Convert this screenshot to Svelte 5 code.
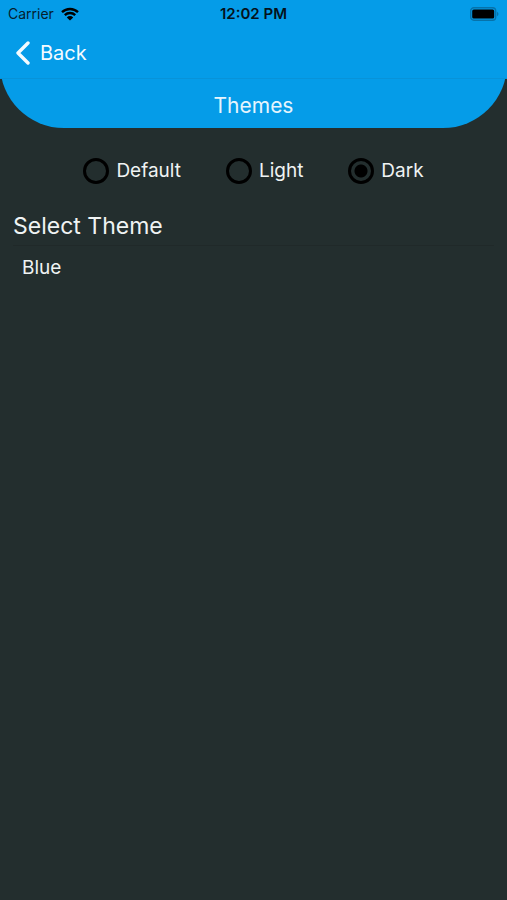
<script lang="ts">
  const modes = ["Default", "Light", "Dark"];
  const themes = ["Blue"];

  let mode = $state("Dark");
</script>

<div class="screen">
  <header>
    <div class="status">
      <div class="carrier">
        <span>Carrier</span>
        <svg width="18" height="14" viewBox="0 0 18 14" aria-hidden="true">
          <path d="M1 5.2a11.6 11.6 0 0 1 16 0" />
          <path d="M3.8 8.1a7.5 7.5 0 0 1 10.4 0" />
          <path class="dot" d="M9 13.6 5.8 10.4a4.6 4.6 0 0 1 6.4 0z" />
        </svg>
      </div>
      <time>12:02 PM</time>
      <div class="battery">
        <svg width="29" height="14" viewBox="0 0 29 14" aria-hidden="true">
          <rect class="case" x="0.7" y="0.7" width="25" height="12.6" rx="3.2" />
          <rect x="2.2" y="2.4" width="22" height="9.2" rx="1.6" />
          <path class="cap" d="M27 4.8v4.4c2-.8 2-3.6 0-4.4z" />
        </svg>
      </div>
    </div>
    <nav>
      <button class="back">
        <svg width="16" height="24" viewBox="0 0 16 24" aria-hidden="true">
          <path d="M13 2 3 12l10 10" />
        </svg>
        <span>Back</span>
      </button>
    </nav>
  </header>

  <h1>Themes</h1>

  <div class="modes" role="radiogroup" aria-label="Mode">
    {#each modes as item}
      <label>
        <input type="radio" name="mode" value={item} bind:group={mode} />
        <span>{item}</span>
      </label>
    {/each}
  </div>

  <section>
    <h2>Select Theme</h2>
    {#each themes as theme}
      <button class="theme">{theme}</button>
    {/each}
  </section>
</div>

<style>
  :global(body) {
    margin: 0;
    background: #232e2e;
  }

  .screen {
    min-height: 100vh;
    background: #232e2e;
    color: #eff3f3;
    font-family: Inter, "Liberation Sans", sans-serif;
  }

  button {
    border: 0;
    padding: 0;
    background: none;
    color: inherit;
    font: inherit;
    cursor: pointer;
  }

  header {
    position: relative;
    z-index: 1;
    background: #059ce8;
    border-bottom: 1px solid #0893d9;
  }

  .status {
    display: grid;
    grid-template-columns: 1fr auto 1fr;
    align-items: center;
    height: 27px;
    padding: 0 8px;
    color: #06202e;
    font-size: 14px;
  }

  .status time {
    color: #04121b;
    font-size: 15px;
    font-weight: 600;
  }

  .carrier {
    display: flex;
    align-items: center;
    gap: 7px;
  }

  .carrier path {
    fill: none;
    stroke: #000;
    stroke-width: 2.4;
  }

  .carrier .dot {
    fill: #000;
    stroke: none;
  }

  .battery {
    display: flex;
    justify-content: flex-end;
  }

  .battery .case {
    fill: none;
    stroke: #0672aa;
    stroke-width: 1.4;
  }

  .battery .cap {
    fill: #0672aa;
  }

  nav {
    display: flex;
    align-items: center;
    height: 51px;
    padding: 0 15px;
  }

  .back {
    display: flex;
    align-items: center;
    gap: 9px;
    color: #f4fbff;
    font-size: 20px;
  }

  .back path {
    fill: none;
    stroke: #f4fbff;
    stroke-width: 3.4;
    stroke-linecap: round;
    stroke-linejoin: round;
  }

  /* starts under the nav bar so only the lower part of the curve shows */
  h1 {
    margin: -16px 0 0;
    padding: 29px 0 8px;
    border-radius: 0 0 64px 64px;
    background: #059ce8;
    color: #e6f5fd;
    font-size: 21px;
    font-weight: 400;
    line-height: 28px;
    text-align: center;
  }

  .modes {
    display: flex;
    justify-content: center;
    gap: 45px;
    padding: 29px 0 27px;
  }

  label {
    display: flex;
    align-items: center;
    gap: 7px;
    font-size: 19px;
    line-height: 28px;
    cursor: pointer;
  }

  input {
    appearance: none;
    box-sizing: border-box;
    width: 26px;
    height: 26px;
    margin: 0;
    border: 3px solid #000;
    border-radius: 50%;
  }

  input:checked {
    background: radial-gradient(circle, #000 6px, transparent 7px);
  }

  section {
    padding: 0 13px;
  }

  h2 {
    margin: 0;
    padding-bottom: 4px;
    border-bottom: 1px solid #202929;
    font-size: 23px;
    font-weight: 400;
    line-height: 29px;
  }

  .theme {
    display: block;
    width: 100%;
    padding: 8px 9px;
    font-size: 19px;
    line-height: 28px;
    text-align: left;
  }
</style>
